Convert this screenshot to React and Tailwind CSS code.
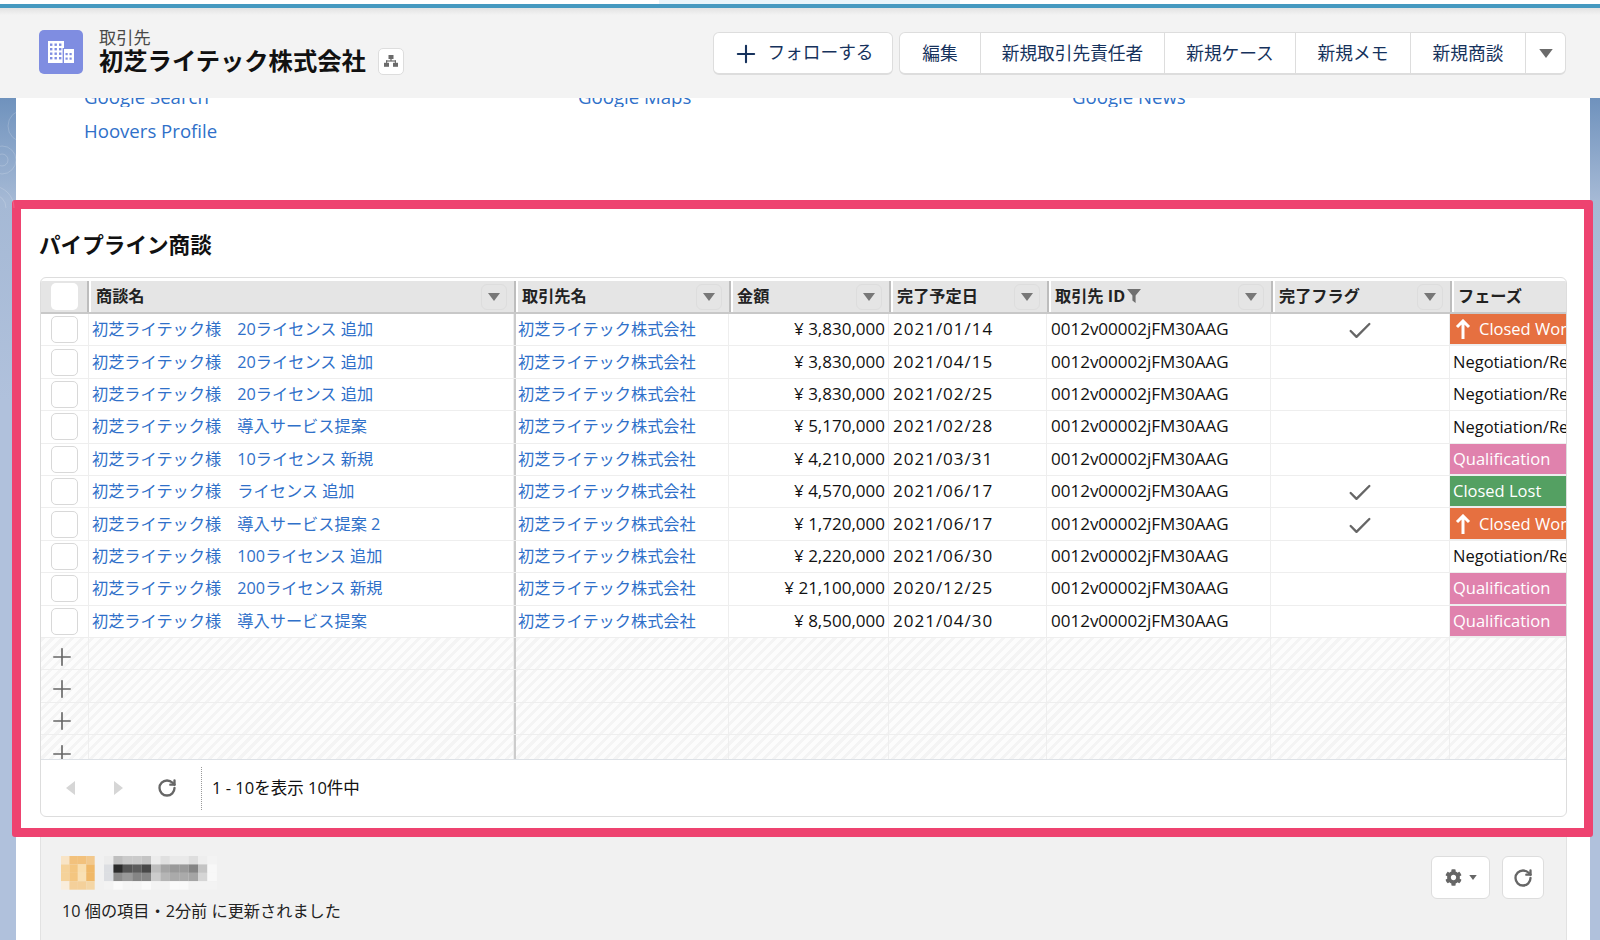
import { Plus, Check, RotateCw } from 'lucide-react';
import { FaCog } from 'react-icons/fa';

const rows = [
    { name: '初芝ライテック様　20ライセンス 追加', amount: '¥ 3,830,000', date: '2021/01/14', done: true, phase: 'won' },
    { name: '初芝ライテック様　20ライセンス 追加', amount: '¥ 3,830,000', date: '2021/04/15', phase: 'nego' },
    { name: '初芝ライテック様　20ライセンス 追加', amount: '¥ 3,830,000', date: '2021/02/25', phase: 'nego' },
    { name: '初芝ライテック様　導入サービス提案', amount: '¥ 5,170,000', date: '2021/02/28', phase: 'nego' },
    { name: '初芝ライテック様　10ライセンス 新規', amount: '¥ 4,210,000', date: '2021/03/31', phase: 'qual' },
    { name: '初芝ライテック様　ライセンス 追加', amount: '¥ 4,570,000', date: '2021/06/17', done: true, phase: 'lost' },
    { name: '初芝ライテック様　導入サービス提案 2', amount: '¥ 1,720,000', date: '2021/06/17', done: true, phase: 'won' },
    { name: '初芝ライテック様　100ライセンス 追加', amount: '¥ 2,220,000', date: '2021/06/30', phase: 'nego' },
    { name: '初芝ライテック様　200ライセンス 新規', amount: '¥ 21,100,000', date: '2020/12/25', phase: 'qual' },
    { name: '初芝ライテック様　導入サービス提案', amount: '¥ 8,500,000', date: '2021/04/30', phase: 'qual' },
];

const gridCols = 'grid grid-cols-[48px_425px_215px_160px_158px_224px_179px_116px]';
const bodyCell = 'border-r border-[#eeeeee] min-w-0 overflow-hidden whitespace-nowrap';

// blurred-out user name from the screenshot
const mosaic = [
    ['#ececec', '#bfbfbf', '#cacaca', '#cacaca', '#c4c4c4', '#ececec', '#e0e0e0', '#e9e9e9', '#e9e9e9', '#dedede', '#eeeeee', '#f3f3f3'],
    ['#dcdee2', '#2b2b2b', '#555555', '#5c5c5c', '#484848', '#bdbdbd', '#a5a5a5', '#999999', '#999999', '#858585', '#c4c4c4', '#f8f8f8'],
    ['#dcdee2', '#8b8b8b', '#999999', '#858585', '#858585', '#cccccc', '#b5b5b5', '#aaaaaa', '#aaaaaa', '#a5a5a5', '#d5d5d5', '#f8f8f8'],
    ['#f3f3f3', '#fafafa', '#f5f5f5', '#f5f5f5', '#fafafa', '#f3f3f3', '#f3f3f3', '#fafafa', '#fafafa', '#f3f3f3', '#f3f3f3', '#f3f3f3'],
];

const avatar = [
    ['#f8e4c6', '#f2c17c', '#f2c17c', '#f2c88c'],
    ['#f5d29a', '#f4c680', '#f9deae', '#f0b868'],
    ['#f5d29a', '#f4c680', '#f9e0b4', '#f0b868'],
    ['#f9eddc', '#f4d09a', '#f4d09a', '#f4d6a6'],
];

function Triangle({ className }) {
    return (
        <svg viewBox="0 0 12 8" className={className} fill="currentColor">
            <path d="M0 0h12L6 8z" />
        </svg>
    );
}

function SortButton() {
    return (
        <div className="w-[26px] h-[26px] border border-[#dddddd] rounded-md flex items-center justify-center text-[#777777] shrink-0">
            <Triangle className="w-[12px] h-[8px]" />
        </div>
    );
}

function HeaderCell({ label, filter, first }) {
    return (
        <div className={first
            ? 'flex items-center justify-between pl-[7px] pr-[7px] shadow-[inset_2px_0_0_#ffffff]'
            : 'flex items-center justify-between pl-[6px] pr-[7px] border-l-2 border-[#bdbdbd] shadow-[inset_2px_0_0_#ffffff]'}>
            <span className="flex items-center font-bold text-[16.2px] text-[#222222]">
                {label}
                {filter && (
                    <svg viewBox="0 0 14 16" className="ml-[2px] w-[14px] h-[16px] text-[#707070]" fill="currentColor">
                        <path d="M0 1h14L8.6 7.5V15L5.4 12.5V7.5z" />
                    </svg>
                )}
            </span>
            {label !== 'フェーズ' && <SortButton />}
        </div>
    );
}

function Phase({ phase }) {
    if (phase === 'nego') {
        return <div className="h-full flex items-center pl-[3px] text-[#111111]">Negotiation/Review</div>;
    }
    if (phase === 'qual') {
        return <div className="h-full flex items-center pl-[3px] bg-[#e082ad] text-white border-b border-[#eeeeee]">Qualification</div>;
    }
    if (phase === 'lost') {
        return <div className="h-full flex items-center pl-[3px] bg-[#54a062] text-white border-b border-[#eeeeee]">Closed Lost</div>;
    }
    return (
        <div className="h-full flex items-center pl-[5px] gap-[8px] bg-[#e67040] text-white border-b border-[#eeeeee]">
            <svg viewBox="0 0 16 20" className="w-[16px] h-[20px] shrink-0" fill="none" stroke="currentColor" strokeWidth="3">
                <path d="M8 20V2M2 8l6-6 6 6" />
            </svg>
            Closed Won
        </div>
    );
}

function DataRow({ row }) {
    return (
        <div className={`${gridCols} h-[32.4px] border-b border-[#eeeeee] text-[16.2px] leading-[24px] text-[#111111]`}>
            <div className={`${bodyCell} flex items-center justify-center pr-[1px]`}>
                <div className="w-[27px] h-[27px] bg-white border border-[#d8d8d8] rounded-[5px]" />
            </div>
            <div className={`${bodyCell} flex items-center pl-[3px] pb-[1px] text-[#2f70c9]`}>{row.name}</div>
            <div className={`${bodyCell} flex items-center pl-[2px] pb-[1px] border-l-2 border-l-[#cccccc] text-[#2f70c9]`}>初芝ライテック株式会社</div>
            <div className={`${bodyCell} flex items-center justify-end pr-[3px] pb-[1px] text-[17px]`}>{row.amount}</div>
            <div className={`${bodyCell} flex items-center pl-[4px] pb-[1px] text-[17px] tracking-[1px]`}>{row.date}</div>
            <div className={`${bodyCell} flex items-center pl-[4px] pb-[1px] text-[17px]`}>0012v00002jFM30AAG</div>
            <div className={`${bodyCell} flex items-center justify-center pt-[3px] text-[#666666]`}>
                {row.done && <Check size={28} strokeWidth={2} />}
            </div>
            <div className="min-w-0 overflow-hidden whitespace-nowrap text-[16.5px]">
                <Phase phase={row.phase} />
            </div>
        </div>
    );
}

function EmptyRow() {
    return (
        <div className={`${gridCols} h-[32.4px] border-b border-[#eeeeee]`}>
            <div className={`${bodyCell} flex items-center pl-[7px] pt-[6px] text-[#666666]`}>
                <Plus size={28} strokeWidth={1.4} className="shrink-0" />
            </div>
            <div className={bodyCell} />
            <div className={`${bodyCell} border-l-2 border-l-[#cccccc]`} />
            <div className={bodyCell} />
            <div className={bodyCell} />
            <div className={bodyCell} />
            <div className={bodyCell} />
            <div />
        </div>
    );
}

export default function App() {
    return (
        <div className="relative w-[1600px] h-[940px] overflow-hidden flex flex-col bg-[linear-gradient(180deg,#6f92bd_0px,#6f92bd_98px,#a5b9d5_200px,#b0c1dc_400px,#b0c1dc_940px)] font-['Open_Sans','Noto_Sans_CJK_JP',sans-serif]">
            {/* faint rings of the page's background picture */}
            <svg viewBox="0 0 16 110" className="absolute left-0 top-[98px] w-[16px] h-[110px]" fill="none" stroke="#ffffff" strokeOpacity="0.18">
                <circle cx="24" cy="28" r="16" />
                <circle cx="2" cy="62" r="14" />
                <circle cx="2" cy="62" r="6" />
                <circle cx="-8" cy="110" r="22" />
                <circle cx="-8" cy="110" r="14" />
            </svg>

            {/* top bars */}
            <div className="h-1 bg-white flex shrink-0">
                <div className="ml-[659px] w-[301px] bg-[#e8f4fa]" />
            </div>
            <div className="h-1 bg-[#4599c0] shrink-0" />

            <header className="h-[90px] shrink-0 bg-[#f3f3f3] bg-[linear-gradient(180deg,#e2e2e2_0px,#f3f3f3_7px)] flex items-center justify-between pl-[39px] pr-[34px] pb-[4px]">
                <div className="flex items-center">
                    <div className="w-[44px] h-[44px] rounded-[5px] bg-[#7f8de1] flex items-center justify-center mt-[2px]">
                        <svg viewBox="0 0 26 22" className="w-[26px] h-[22px]" fill="#ffffff">
                            <path d="M0 0h16v22H0z" />
                            <rect x="15" y="8" width="11" height="14" fill="#ffffff" />
                            <g fill="#7f8de1">
                                <rect x="2" y="2.5" width="2.4" height="2.4" /><rect x="6.5" y="2.5" width="2.4" height="2.4" /><rect x="11" y="2.5" width="2.4" height="2.4" />
                                <rect x="2" y="7" width="2.4" height="2.4" /><rect x="6.5" y="7" width="2.4" height="2.4" /><rect x="11" y="7" width="2.4" height="2.4" />
                                <rect x="2" y="11.5" width="2.4" height="2.4" /><rect x="6.5" y="11.5" width="2.4" height="2.4" /><rect x="11" y="11.5" width="2.4" height="2.4" />
                                <rect x="2" y="16" width="2.4" height="2.4" /><rect x="6.5" y="16" width="2.4" height="2.4" /><rect x="11" y="16" width="2.4" height="2.4" />
                                <rect x="14.6" y="7" width="1.4" height="15" />
                                <rect x="17.5" y="12" width="2.2" height="2.2" /><rect x="21.5" y="12" width="2.2" height="2.2" />
                                <rect x="17.5" y="16.5" width="2.2" height="2.2" /><rect x="21.5" y="16.5" width="2.2" height="2.2" />
                            </g>
                        </svg>
                    </div>
                    <div className="ml-[16px]">
                        <div className="text-[17.2px] leading-[22px] -mb-[2px] text-[#4a4a48]">取引先</div>
                        <div className="flex items-center">
                            <span className="text-[24.3px] leading-[28px] font-bold text-[#111111]">初芝ライテック株式会社</span>
                            <div className="ml-[12px] w-[26px] h-[27px] bg-white border border-[#dddddd] rounded-[5px] flex items-center justify-center">
                                <svg viewBox="0 0 14 12" className="w-[14px] h-[12px]" fill="#6b6b6b">
                                    <rect x="4.5" y="0" width="5" height="4" />
                                    <rect x="6.4" y="4" width="1.2" height="2" />
                                    <rect x="2" y="5.4" width="10" height="1.2" />
                                    <rect x="2" y="5.4" width="1.2" height="2.5" />
                                    <rect x="10.8" y="5.4" width="1.2" height="2.5" />
                                    <rect x="0" y="7.8" width="5" height="4" />
                                    <rect x="9" y="7.8" width="5" height="4" />
                                </svg>
                            </div>
                        </div>
                    </div>
                </div>
                <div className="flex items-center mt-[5px] text-[17.7px] text-[#16325c]">
                    <div className="w-[180px] h-[43px] bg-white border border-[#dddddd] border-b-2 rounded-md flex items-center justify-center gap-[7px]">
                        <Plus size={28} strokeWidth={1.8} className="shrink-0 mt-[1px]" />
                        <span className="pb-[1px]">フォローする</span>
                    </div>
                    <div className="ml-[6px] w-[667px] h-[43px] bg-white border border-[#dddddd] border-b-2 rounded-md grid grid-cols-[81px_184px_131px_115px_115px_1fr]">
                        <div className="flex items-center justify-center border-r border-[#dddddd]">編集</div>
                        <div className="flex items-center justify-center border-r border-[#dddddd]">新規取引先責任者</div>
                        <div className="flex items-center justify-center border-r border-[#dddddd]">新規ケース</div>
                        <div className="flex items-center justify-center border-r border-[#dddddd]">新規メモ</div>
                        <div className="flex items-center justify-center border-r border-[#dddddd]">新規商談</div>
                        <div className="flex items-center justify-center text-[#6b6b6b]">
                            <Triangle className="w-[14px] h-[9px]" />
                        </div>
                    </div>
                </div>
            </header>

            <main className="flex-1 min-h-0 ml-4 mr-[10px] bg-white flex flex-col">
                {/* links scrolled under the header */}
                <div className="h-[9px] overflow-hidden flex items-end pl-[68px] text-[18.6px] leading-[20px] text-[#2f70c9] shrink-0">
                    <span className="w-[494px]">Google Search</span>
                    <span className="w-[494px]">Google Maps</span>
                    <span>Google News</span>
                </div>
                <a className="ml-[68px] mt-[11px] text-[18.6px] leading-[26px] text-[#2f70c9] shrink-0">Hoovers Profile</a>

                <section className="mt-[56px] -ml-1 -mr-[3px] h-[637px] shrink-0 border-[9px] border-[#ee4370] rounded-[3px] bg-white flex flex-col pl-[19px] pr-[17px]">
                    <h2 className="mt-[22px] -ml-[1px] text-[21.6px] leading-[28px] font-bold text-[#111111]">パイプライン商談</h2>
                    <div className="mt-[18px] h-[540px] border border-[#dddddd] rounded-[6px] flex flex-col overflow-hidden">
                        <div className={`${gridCols} mt-[3px] h-[33px] shrink-0 bg-[#e5e5e5] border-b-2 border-[#c8c8c8]`}>
                            <div className="flex items-center justify-center border-r-2 border-[#bdbdbd]">
                                <div className="w-[27px] h-[27px] bg-white rounded-[5px]" />
                            </div>
                            <HeaderCell label="商談名" first />
                            <HeaderCell label="取引先名" />
                            <HeaderCell label="金額" />
                            <HeaderCell label="完了予定日" />
                            <HeaderCell label="取引先 ID" filter />
                            <HeaderCell label="完了フラグ" />
                            <HeaderCell label="フェーズ" />
                        </div>
                        <div className="h-[445px] shrink-0 overflow-hidden">
                            {rows.map((row, i) => (
                                <DataRow key={i} row={row} />
                            ))}
                            <div className="bg-[repeating-linear-gradient(135deg,#f4f4f4_0px,#f4f4f4_3px,#fcfcfc_3px,#fcfcfc_7px)]">
                                <EmptyRow />
                                <EmptyRow />
                                <EmptyRow />
                                <EmptyRow />
                            </div>
                        </div>
                        <div className="flex-1 border-t border-[#dde1e6] flex items-center text-[16.5px] text-[#111111]">
                            <div className="w-[160px] flex items-center pl-[25px] text-[#d6d6d6]">
                                <svg viewBox="0 0 9 14" className="w-[9px] h-[14px]" fill="currentColor"><path d="M9 0v14L0 7z" /></svg>
                                <svg viewBox="0 0 9 14" className="ml-[39px] w-[9px] h-[14px]" fill="currentColor"><path d="M0 0v14l9-7z" /></svg>
                                <RotateCw size={20} strokeWidth={2.8} className="ml-[34px] text-[#666666]" />
                            </div>
                            <div className="h-[43px] border-l border-dotted border-[#999999]" />
                            <span className="ml-[10px]">1 - 10を表示 10件中</span>
                        </div>
                    </div>
                </section>

                <div className="flex-1 ml-6 mr-[23px] bg-[#f1f1f1] border-x border-[#e2e2e2] flex justify-between pl-[21px] pr-[22px] pt-[19px]">
                    <div>
                        <svg width="170" height="34" viewBox="0 0 170 34" className="-ml-[2px] blur-[0.6px]">
                            {avatar.map((line, r) =>
                                line.map((c, i) => <rect key={`a${r}${i}`} x={1 + i * 8.4} y={r * 8.4} width="8.5" height="8.5" fill={c} />)
                            )}
                            {mosaic.map((line, r) =>
                                line.map((c, i) => <rect key={`m${r}${i}`} x={44 + i * 9.4} y={r * 8.4} width="9.5" height="8.5" fill={c} />)
                            )}
                        </svg>
                        <p className="mt-[9px] text-[16.2px] leading-[24px] text-[#222222]">10 個の項目・2分前 に更新されました</p>
                    </div>
                    <div className="flex gap-[12px] items-start">
                        <div className="w-[59px] h-[43px] bg-white border border-[#dddddd] rounded-md flex items-center justify-center gap-[7px] text-[#666666]">
                            <FaCog size={17} />
                            <Triangle className="w-[8px] h-[5px]" />
                        </div>
                        <div className="w-[42px] h-[43px] bg-white border border-[#dddddd] rounded-md flex items-center justify-center text-[#666666]">
                            <RotateCw size={20} strokeWidth={2.8} />
                        </div>
                    </div>
                </div>
            </main>
        </div>
    );
}
